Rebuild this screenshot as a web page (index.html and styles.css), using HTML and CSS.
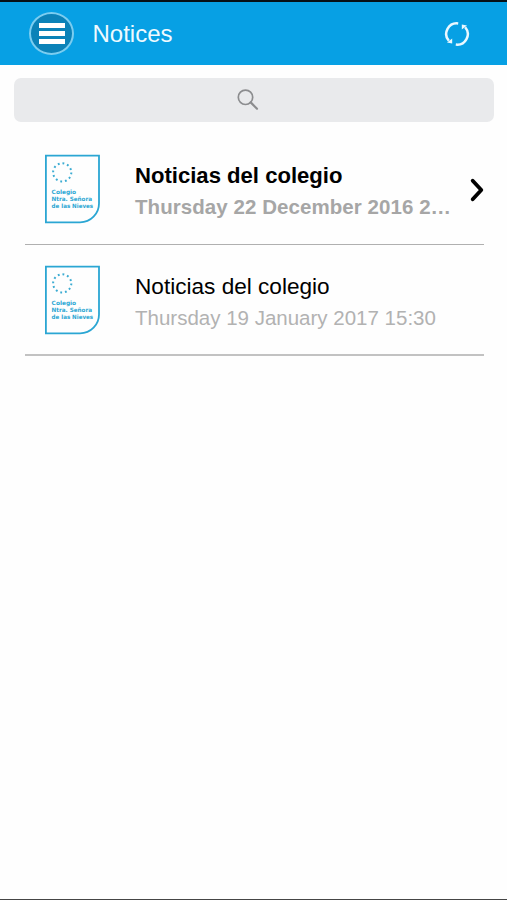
FILE: index.html
```
<!DOCTYPE html>
<html lang="en">
    <head>
        <title>Notices</title>
        <meta charset="UTF-8">
        <meta name="viewport" content="width=device-width, initial-scale=1.0">
        <link rel="stylesheet" href="styles.css">
    </head>
    <body>
        <header class="header">
            <button type="button" class="menu" aria-label="Menu">
                <span></span><span></span><span></span>
            </button>
            <h1>Notices</h1>
            <svg class="refresh" width="26" height="26" viewBox="0 0 26 26">
                <g fill="none" stroke="#eaf8ff" stroke-width="2.5">
                    <path d="M14.2 2.4A10.6 10.6 0 0 0 4.8 19.8"/>
                    <path d="M11.8 23.6A10.6 10.6 0 0 0 21.2 6.2"/>
                </g>
                <path d="M3 21.6L8.2 22.4L8.2 17.6Z" fill="#eaf8ff"/>
                <path d="M23 4.4L17.8 3.6L17.8 8.4Z" fill="#eaf8ff"/>
            </svg>
        </header>

        <div class="search">
            <svg width="22" height="22" viewBox="0 0 22 22" fill="none" stroke="#8c8d8f">
                <circle cx="8.5" cy="8.3" r="7.2" stroke-width="1.7"/>
                <path d="M13.7 13.4L20 19.7" stroke-width="2.2" stroke-linecap="round"/>
            </svg>
        </div>

        <main class="list">
            <div class="notice unread">
                <svg class="logo" viewBox="0 0 56 70">
                    <path d="M1.9 1.6H55V49A19 19 0 0 1 36 68.4H1.9Z" fill="none" stroke="#2ba6d3" stroke-width="1.8"/>
                    <circle cx="18.2" cy="18.4" r="9.1" fill="none" stroke="#3cacd2" stroke-width="2" stroke-dasharray="1.85 2.915"/>
                    <text x="7.6" y="40.2" textLength="24.5" lengthAdjust="spacingAndGlyphs">Colegio</text>
                    <text x="7.6" y="47.3" textLength="40.5" lengthAdjust="spacingAndGlyphs">Ntra. Señora</text>
                    <text x="7.6" y="54.4" textLength="41.5" lengthAdjust="spacingAndGlyphs">de las Nieves</text>
                </svg>
                <div class="info">
                    <div class="title">Noticias del colegio</div>
                    <div class="date">Thursday 22 December 2016 2…</div>
                </div>
                <svg class="arrow" width="16" height="26" viewBox="0 0 16 26">
                    <path d="M3.7 3.7L12.3 13L3.7 22.3" fill="none" stroke="#000" stroke-width="3.8" stroke-linecap="round" stroke-linejoin="round"/>
                </svg>
            </div>
            <div class="notice">
                <svg class="logo" viewBox="0 0 56 70">
                    <path d="M1.9 1.6H55V49A19 19 0 0 1 36 68.4H1.9Z" fill="none" stroke="#2ba6d3" stroke-width="1.8"/>
                    <circle cx="18.2" cy="18.4" r="9.1" fill="none" stroke="#3cacd2" stroke-width="2" stroke-dasharray="1.85 2.915"/>
                    <text x="7.6" y="40.2" textLength="24.5" lengthAdjust="spacingAndGlyphs">Colegio</text>
                    <text x="7.6" y="47.3" textLength="40.5" lengthAdjust="spacingAndGlyphs">Ntra. Señora</text>
                    <text x="7.6" y="54.4" textLength="41.5" lengthAdjust="spacingAndGlyphs">de las Nieves</text>
                </svg>
                <div class="info">
                    <div class="title">Noticias del colegio</div>
                    <div class="date">Thursday 19 January 2017 15:30</div>
                </div>
            </div>
        </main>
    </body>
</html>
```
FILE: styles.css
```
* {
    box-sizing: border-box;
}
body {
    font-family: "Liberation Sans", Arial, sans-serif;
    margin: 0;
    height: 900px;
    background-color: #fefefe;
    color: #000;
    border-top: 2px solid #061016;
    border-bottom: 1px solid #454545;
    overflow: hidden;
}
.header {
    display: flex;
    align-items: center;
    height: 63px;
    padding: 0 37px 0 29px;
    background-color: #07a0e4;
}
.menu {
    display: flex;
    flex-direction: column;
    align-items: center;
    justify-content: center;
    gap: 3px;
    width: 45px;
    height: 43px;
    padding: 0 0 0 1px;
    border: 2px solid #7bcdf0;
    border-radius: 50%;
    background-color: #0b82b8;
}
.menu span {
    width: 26px;
    height: 5px;
    background-color: #fff;
}
.header h1 {
    flex: 1;
    margin: 0 0 0 18.5px;
    font-size: 24px;
    font-weight: normal;
    line-height: 28px;
    color: #effaff;
}
.search {
    display: flex;
    align-items: center;
    justify-content: center;
    height: 44px;
    margin: 13px 13px 0 14px;
    padding-right: 12px;
    border-radius: 7px;
    background-color: #e9eaec;
}
.list {
    margin: 12px 23px 0 25px;
}
.notice {
    display: flex;
    height: 111px;
    padding-top: 20px;
    border-bottom: 1px solid #b0b0b0;
}
.notice:last-child {
    border-bottom: 2px solid #c2c2c2;
}
.logo {
    flex-shrink: 0;
    width: 56px;
    height: 70px;
    margin-left: 19px;
}
.logo text {
    font-family: "DejaVu Sans", sans-serif;
    font-size: 5.9px;
    font-weight: bold;
    fill: #2ba6d3;
}
.info {
    flex-shrink: 0;
    width: 317px;
    margin: 7px 0 0 35px;
    white-space: nowrap;
}
.title {
    font-size: 22.6px;
    line-height: 30px;
}
.date {
    font-size: 20.5px;
    line-height: 32px;
    color: #b2b2b2;
}
.unread .title {
    font-size: 22.1px;
    font-weight: bold;
}
.unread .date {
    font-weight: bold;
    letter-spacing: 0.06px;
    color: #a6a6a6;
}
.arrow {
    flex-shrink: 0;
    margin: 23px 0 0 17px;
}
```
